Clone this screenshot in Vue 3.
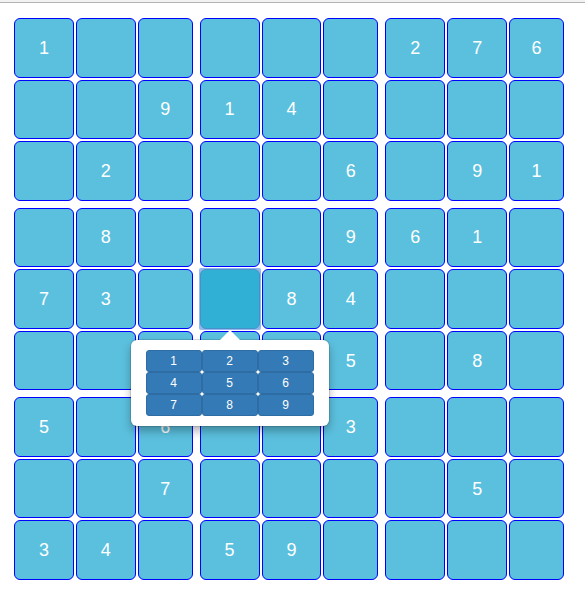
<script setup>
import { ref } from 'vue'

const rows = ref([
  [1, 0, 0, 0, 0, 0, 2, 7, 6],
  [0, 0, 9, 1, 4, 0, 0, 0, 0],
  [0, 2, 0, 0, 0, 6, 0, 9, 1],
  [0, 8, 0, 0, 0, 9, 6, 1, 0],
  [7, 3, 0, 0, 8, 4, 0, 0, 0],
  [0, 0, 0, 0, 0, 5, 0, 8, 0],
  [5, 0, 6, 0, 0, 3, 0, 0, 0],
  [0, 0, 7, 0, 0, 0, 0, 5, 0],
  [3, 4, 0, 5, 9, 0, 0, 0, 0]
])

// Each block lists the [row, column] pairs of its nine cells.
const blocks = Array.from({ length: 9 }, (_, b) =>
  Array.from({ length: 9 }, (_, i) => [
    Math.floor(b / 3) * 3 + Math.floor(i / 3),
    (b % 3) * 3 + (i % 3)
  ])
)

const selected = ref([4, 3])

const isSelected = (r, c) =>
  selected.value !== null && selected.value[0] === r && selected.value[1] === c

function toggle(r, c) {
  selected.value = isSelected(r, c) ? null : [r, c]
}

function choose(n) {
  const [r, c] = selected.value
  rows.value[r][c] = n
  selected.value = null
}
</script>

<template>
  <header class="topbar"></header>
  <main class="page">
    <div class="board">
      <div v-for="(block, b) in blocks" :key="b" class="block">
        <div
          v-for="[r, c] in block"
          :key="`${r}-${c}`"
          class="slot"
          :class="{ open: isSelected(r, c) }"
        >
          <button type="button" class="cell" @click="toggle(r, c)">{{ rows[r][c] || '' }}</button>
          <div v-if="isSelected(r, c)" class="popover">
            <div class="keypad">
              <button
                v-for="n in 9"
                :key="n"
                type="button"
                class="key"
                @click="choose(n)"
              >{{ n }}</button>
            </div>
          </div>
        </div>
      </div>
    </div>
  </main>
</template>

<style>
body {
  background: #fff;
}
</style>

<style scoped>
.topbar {
  box-sizing: border-box;
  height: 3px;
  background: #f2f2f2;
  border-bottom: 1px solid #b4b4b4;
}

.page {
  padding: 15px 21px 23px 14px;
  font-family: "Liberation Sans", Arial, sans-serif;
}

.board {
  display: grid;
  grid-template-columns: repeat(3, 1fr);
  grid-template-rows: repeat(3, 1fr);
  gap: 7px;
  aspect-ratio: 550 / 562;
}

.block {
  display: grid;
  grid-template-columns: 60fr 60fr 55fr;
  grid-template-rows: repeat(3, 1fr);
  gap: 2px;
}

.slot {
  position: relative;
  display: grid;
}

.slot.open {
  z-index: 1;
}

.cell {
  min-width: 0;
  padding: 0;
  border: 1px solid #00f;
  border-radius: 6px;
  background: #5bc0de;
  color: #fff;
  font-family: inherit;
  font-size: 18px;
  line-height: 24px;
  cursor: pointer;
}

.open .cell {
  border-color: #4a90c8;
  background: #31b0d5;
  outline: none;
}

/* Focus ring behind the open cell, with tighter corners than the cell. */
.open::before {
  content: "";
  position: absolute;
  z-index: -1;
  inset: -1px;
  border-radius: 2px;
  background: #93b8f0;
}

.popover {
  position: absolute;
  top: 100%;
  left: 50%;
  margin-top: 11px;
  padding: 10px 15px;
  transform: translateX(-50%);
  border-radius: 6px;
  background: #fff;
  box-shadow: 0 0 0 1px rgba(0, 0, 0, 0.12), 0 5px 10px rgba(0, 0, 0, 0.3);
}

.popover::before {
  content: "";
  position: absolute;
  left: 50%;
  bottom: 100%;
  transform: translateX(-50%);
  border: solid transparent;
  border-width: 0 10px 10px;
  border-bottom-color: #fff;
}

.keypad {
  display: grid;
  grid-template-columns: repeat(3, 56px);
}

.key {
  padding: 1px 5px;
  border: 1px solid #2e6da4;
  border-radius: 3px;
  background: #337ab7;
  color: #fff;
  font-family: inherit;
  font-size: 12px;
  line-height: 18px;
  cursor: pointer;
}
</style>
